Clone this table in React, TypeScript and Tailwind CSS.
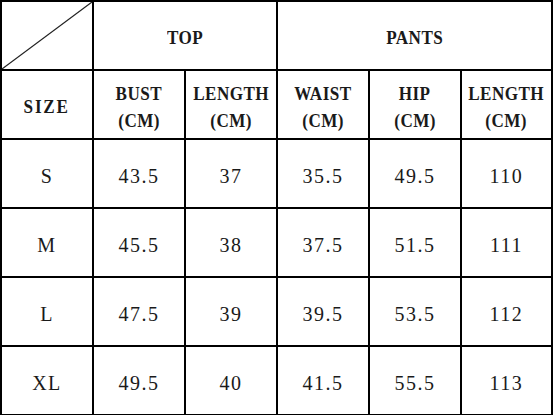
import React from 'react';

const rows = [
  ['S', '43.5', '37', '35.5', '49.5', '110'],
  ['M', '45.5', '38', '37.5', '51.5', '111'],
  ['L', '47.5', '39', '39.5', '53.5', '112'],
  ['XL', '49.5', '40', '41.5', '55.5', '113'],
];

const heads = [
  ['BUST', '(CM)'],
  ['LENGTH', '(CM)'],
  ['WAIST', '(CM)'],
  ['HIP', '(CM)'],
  ['LENGTH', '(CM)'],
];

const cell = 'bg-white flex items-center justify-center text-center pt-[5px]';
const head = 'font-bold text-[19px] tracking-[0.5px]';

export default function App() {
  return (
    <div className="w-[553px] h-[415px] bg-white overflow-hidden">
      <div
        className="grid grid-cols-[90px_90px_90px_90px_90px_89px] grid-rows-[67px_67px_67px_67px_67px_67px] gap-[2px] p-[2px] bg-black w-fit text-[20px] tracking-[1.5px] text-[#1a1a1a]"
        style={{ fontFamily: '"Liberation Serif", "DejaVu Serif", serif' }}
      >
        {/* diagonal corner */}
        <div className="bg-white relative">
          <svg className="absolute inset-0" width="90" height="67" viewBox="0 0 90 67">
            <line x1="0" y1="67" x2="90" y2="0" stroke="#222" strokeWidth="1.2" />
          </svg>
        </div>
        <div className={`${cell} ${head} col-span-2`}>
          <span className="inline-block scale-x-90">TOP</span>
        </div>
        <div className={`${cell} ${head} col-span-3`}>
          <span className="inline-block scale-x-90">PANTS</span>
        </div>

        <div className={`${cell} ${head}`}>
          <span className="inline-block scale-x-90 tracking-[2px]">SIZE</span>
        </div>
        {heads.map((h, i) => (
          <div key={i} className={`${cell} ${head} flex-col leading-[27px]`}>
            <span className="inline-block scale-x-90">{h[0]}</span>
            <span className="inline-block scale-x-90">{h[1]}</span>
          </div>
        ))}

        {rows.map((r) =>
          r.map((v, j) => (
            <div key={r[0] + j} className={cell}>
              {v}
            </div>
          ))
        )}
      </div>
    </div>
  );
}
